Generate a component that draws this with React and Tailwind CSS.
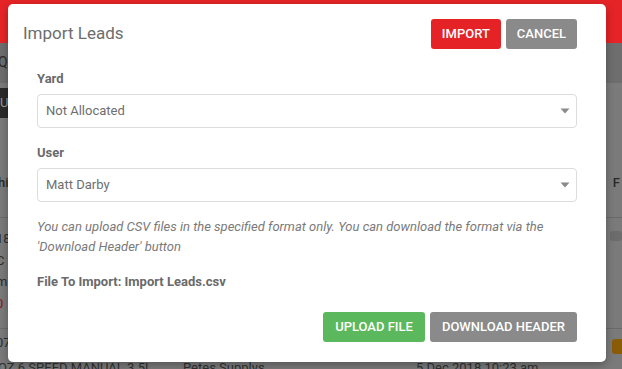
function Caret() {
  return (
    <svg width="10" height="6" viewBox="0 0 10 6" className="shrink-0">
      <path d="M0.5 0.5 L9.5 0.5 L5 5.5 Z" fill="#8a8a8a" />
    </svg>
  );
}

function SelectField({ label, value }) {
  return (
    <div>
      <div className="text-[13px] leading-[18px] font-bold text-[#6a6a6a] mb-[6px]">{label}</div>
      <div className="h-[34px] border border-[#dcdcdc] rounded-[4px] flex items-center justify-between pl-[8px] pr-[6px]">
        <span className="text-[13px] text-[#6e6e6e]">{value}</span>
        <Caret />
      </div>
    </div>
  );
}

function Backdrop() {
  return (
    <div className="w-full h-full flex flex-col text-[13px] text-[#2c2c2c]">
      <div className="h-[43px] shrink-0 bg-[#e52427]" />
      <div className="h-[40px] shrink-0 bg-[#6e6e6e] flex items-center">
        <span className="text-[14px] text-[#2a2a2a] -ml-[2px] mt-[-2px]">Q</span>
      </div>
      <div className="h-[5px] shrink-0 bg-[#7b7b7b]" />
      <div className="h-[30px] shrink-0 flex">
        <div className="w-[22px] bg-[#2a2a2a] flex items-center text-[#9a9a9a] text-[13px]">U</div>
      </div>
      <div className="h-[100px] shrink-0 flex justify-between items-start pt-[56px] border-b border-[#6a6a6a]">
        <span className="text-[#2a2a2a] text-[13px] leading-[18px] font-medium -ml-[2px]">hi</span>
        <span className="text-[#2a2a2a] text-[13px] leading-[18px] font-medium mr-[2px]">F</span>
      </div>
      <div className="h-[111px] shrink-0 flex justify-between border-b border-[#6a6a6a]">
        <div className="flex flex-col leading-[21.5px] pt-[10px] -ml-[4px]">
          <span>18</span>
          <span>C</span>
          <span>m</span>
          <span className="text-[#8a1010]">0</span>
        </div>
        <div className="w-[12px] h-[10px] bg-[#6c6c6c] rounded-[3px] mt-[13px]" />
      </div>
      <div className="flex justify-between items-start">
        <div className="flex flex-col pt-[4px]">
          <span className="-ml-[4px] leading-[20px]">07</span>
          <div className="flex text-[#303030] leading-[20px] mt-[5px]">
            <span className="w-[185px] -ml-[2px]">OZ 6 SPEED MANUAL 3.5L</span>
            <span className="w-[233px]">Petes Supplys</span>
            <span>5 Dec 2018 10:23 am</span>
          </div>
        </div>
        <div className="w-[10px] h-[15px] bg-[#8a5c08] rounded-l-[3px] mt-[10px]" />
      </div>
    </div>
  );
}

export default function App() {
  return (
    <div
      className="relative w-[622px] h-[369px] overflow-hidden bg-[#7a7a7a]"
      style={{ fontFamily: "Roboto, 'Liberation Sans', sans-serif" }}
    >
      <Backdrop />
      <div className="absolute left-[8px] top-[4px] w-[598px] h-[358px] bg-white rounded-[5px] shadow-[0_3px_9px_rgba(0,0,0,0.3)] flex flex-col">
        <div className="flex items-center justify-between pl-[15px] pr-[29px] pt-[15px]">
          <h2 className="text-[17px] text-[#6d6d6d]">Import Leads</h2>
          <div className="flex gap-[5px]">
            <button className="h-[30px] px-[11px] rounded-[3px] bg-[#e52226] text-white text-[13px] font-medium">
              IMPORT
            </button>
            <button className="h-[30px] px-[11px] rounded-[3px] bg-[#8a8a8a] text-white text-[13px] font-medium">
              CANCEL
            </button>
          </div>
        </div>
        <div className="px-[29px] pt-[21px] pb-[20px] flex flex-col">
          <SelectField label="Yard" value="Not Allocated" />
          <div className="mt-[16px]">
            <SelectField label="User" value="Matt Darby" />
          </div>
          <p className="mt-[15px] text-[13px] leading-[20px] italic text-[#7a7a7a]">
            You can upload CSV files in the specified format only. You can download the format via the
            <br />
            'Download Header' button
          </p>
          <div className="mt-[16px] text-[13px] leading-[18px] font-bold text-[#6a6a6a]">
            File To Import: Import Leads.csv
          </div>
          <div className="mt-[21px] flex justify-end gap-[5px]">
            <button className="h-[30px] px-[12px] rounded-[3px] bg-[#5cb85c] text-white text-[13px] font-medium">
              UPLOAD FILE
            </button>
            <button className="h-[30px] px-[12px] rounded-[3px] bg-[#8a8a8a] text-white text-[13px] font-medium">
              DOWNLOAD HEADER
            </button>
          </div>
        </div>
      </div>
    </div>
  );
}
